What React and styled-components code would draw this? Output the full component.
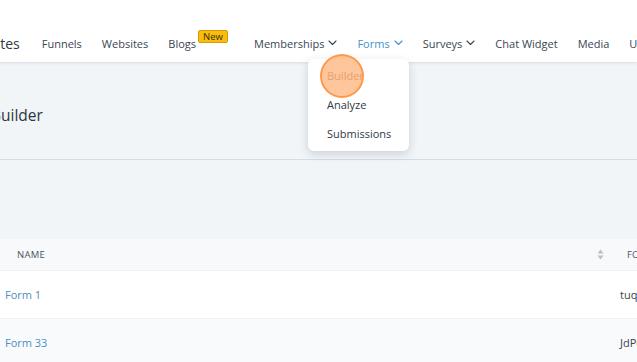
import React from 'react';
import styled, { createGlobalStyle } from 'styled-components';

const GlobalStyle = createGlobalStyle`
  html, body {
    margin: 0;
    padding: 0;
    width: 637px;
    height: 362px;
    overflow: hidden;
    background: #f1f5f8;
  }
  * { box-sizing: border-box; }
  body {
    font-family: "Open Sans", "Noto Sans", sans-serif;
  }
`;

const Page = styled.div`
  position: relative;
  width: 637px;
  height: 362px;
  overflow: hidden;
  background: #f1f5f8;
`;

const TopBar = styled.nav`
  position: relative;
  z-index: 2;
  height: 62px;
  background: #fff;
  box-shadow: 0 1px 3px rgba(30, 45, 60, 0.12);
  display: flex;
  align-items: center;
  gap: 20px;
  padding-top: 24px;
  margin-left: -11px;
  white-space: nowrap;
`;

const Brand = styled.span`
  font-size: 14px;
  color: #2f3a45;
  margin-right: 2px;
`;

const NavItem = styled.span`
  position: relative;
  display: flex;
  align-items: center;
  gap: 4px;
  font-size: 11px;
  color: ${p => (p.active ? '#3d93c9' : '#3a4653')};
`;

const Badge = styled.span`
  position: absolute;
  left: calc(100% + 2px);
  top: -6px;
  font-size: 9.5px;
  line-height: 11px;
  padding: 0 4px;
  background: #f8bd0f;
  border: 1px solid #d79d00;
  border-radius: 2px;
  color: #3b3000;
`;

const BlogsWrap = styled.span`
  margin-right: 38px;
`;

const Chevron = ({ color }) => (
  <svg width="9" height="6" viewBox="0 0 9 6" fill="none">
    <path d="M1 1l3.5 3.5L8 1" stroke={color} strokeWidth="1.1" strokeLinecap="round" strokeLinejoin="round" />
  </svg>
);

const Header = styled.header`
  height: 98px;
  border-bottom: 1px solid #d6dce2;
  display: flex;
  align-items: center;
  padding-top: 8px;
`;

const Title = styled.h1`
  margin: 0 0 0 -9px;
  font-size: 15.5px;
  font-weight: 400;
  color: #2f3640;
`;

const Spacer = styled.div`
  height: 79px;
`;

const Table = styled.div`
  display: flex;
  flex-direction: column;
`;

const Row = styled.div`
  height: ${p => p.h}px;
  display: flex;
  align-items: center;
  background: ${p => p.bg};
  border-bottom: 1px solid #eef2f5;
  font-size: 11px;
`;

const NameCell = styled.div`
  flex: 1;
  padding-left: ${p => (p.head ? 17 : 5)}px;
  color: ${p => (p.head ? '#4a5561' : '#4b8fc0')};
  font-size: ${p => (p.head ? '9.5px' : '11px')};
  letter-spacing: ${p => (p.head ? '0.3px' : '0')};
`;

const SortIcon = styled.div`
  flex-shrink: 0;
  width: 14px;
  display: flex;
  justify-content: center;
`;

const FieldCell = styled.div`
  flex-shrink: 0;
  width: ${p => (p.head ? 30 : 37)}px;
  padding-left: 20px;
  color: ${p => (p.head ? '#4a5561' : '#3a4450')};
  font-size: ${p => (p.head ? '9.5px' : '11px')};
  white-space: nowrap;
`;

const Menu = styled.div`
  position: absolute;
  z-index: 3;
  left: 308px;
  top: 59px;
  width: 101px;
  height: 92px;
  background: #fff;
  border-radius: 6px;
  box-shadow: 0 3px 10px rgba(30, 45, 60, 0.18);
  padding: 8px 0 0 19px;
  display: flex;
  flex-direction: column;
  gap: 11px;
`;

const MenuItem = styled.div`
  font-size: 11px;
  line-height: 18px;
  color: ${p => (p.faded ? '#b6a48c' : '#2f3a45')};
`;

const ClickMark = styled.div`
  position: absolute;
  z-index: 4;
  left: 320px;
  top: 54px;
  width: 44px;
  height: 44px;
  border-radius: 50%;
  background: rgba(255, 160, 90, 0.6);
  border: 2px solid rgba(255, 145, 60, 0.85);
`;

const SortArrows = () => (
  <svg width="7" height="11" viewBox="0 0 7 11">
    <path d="M3.5 0.5L6.5 4.5H0.5z" fill="#b8c0c8" />
    <path d="M3.5 10.5L0.5 6.5H6.5z" fill="#b8c0c8" />
  </svg>
);

export default function App() {
  return (
    <Page>
      <GlobalStyle />
      <TopBar>
        <Brand>Sites</Brand>
        <NavItem>Funnels</NavItem>
        <NavItem>Websites</NavItem>
        <BlogsWrap>
          <NavItem>
            Blogs
            <Badge>New</Badge>
          </NavItem>
        </BlogsWrap>
        <NavItem>Memberships <Chevron color="#3a4653" /></NavItem>
        <NavItem active>Forms <Chevron color="#3d93c9" /></NavItem>
        <NavItem>Surveys <Chevron color="#3a4653" /></NavItem>
        <NavItem>Chat Widget</NavItem>
        <NavItem>Media</NavItem>
        <NavItem>Users</NavItem>
      </TopBar>
      <Header>
        <Title>Builder</Title>
      </Header>
      <Spacer />
      <Table>
        <Row h={32} bg="#f7f9fb">
          <NameCell head>NAME</NameCell>
          <SortIcon><SortArrows /></SortIcon>
          <FieldCell head>FORM</FieldCell>
        </Row>
        <Row h={48} bg="#ffffff">
          <NameCell>Form 1</NameCell>
          <FieldCell>tuqX</FieldCell>
        </Row>
        <Row h={48} bg="#f8fafc">
          <NameCell>Form 33</NameCell>
          <FieldCell>JdPq</FieldCell>
        </Row>
      </Table>
      <Menu>
        <MenuItem faded>Builder</MenuItem>
        <MenuItem>Analyze</MenuItem>
        <MenuItem>Submissions</MenuItem>
      </Menu>
      <ClickMark />
    </Page>
  );
}
